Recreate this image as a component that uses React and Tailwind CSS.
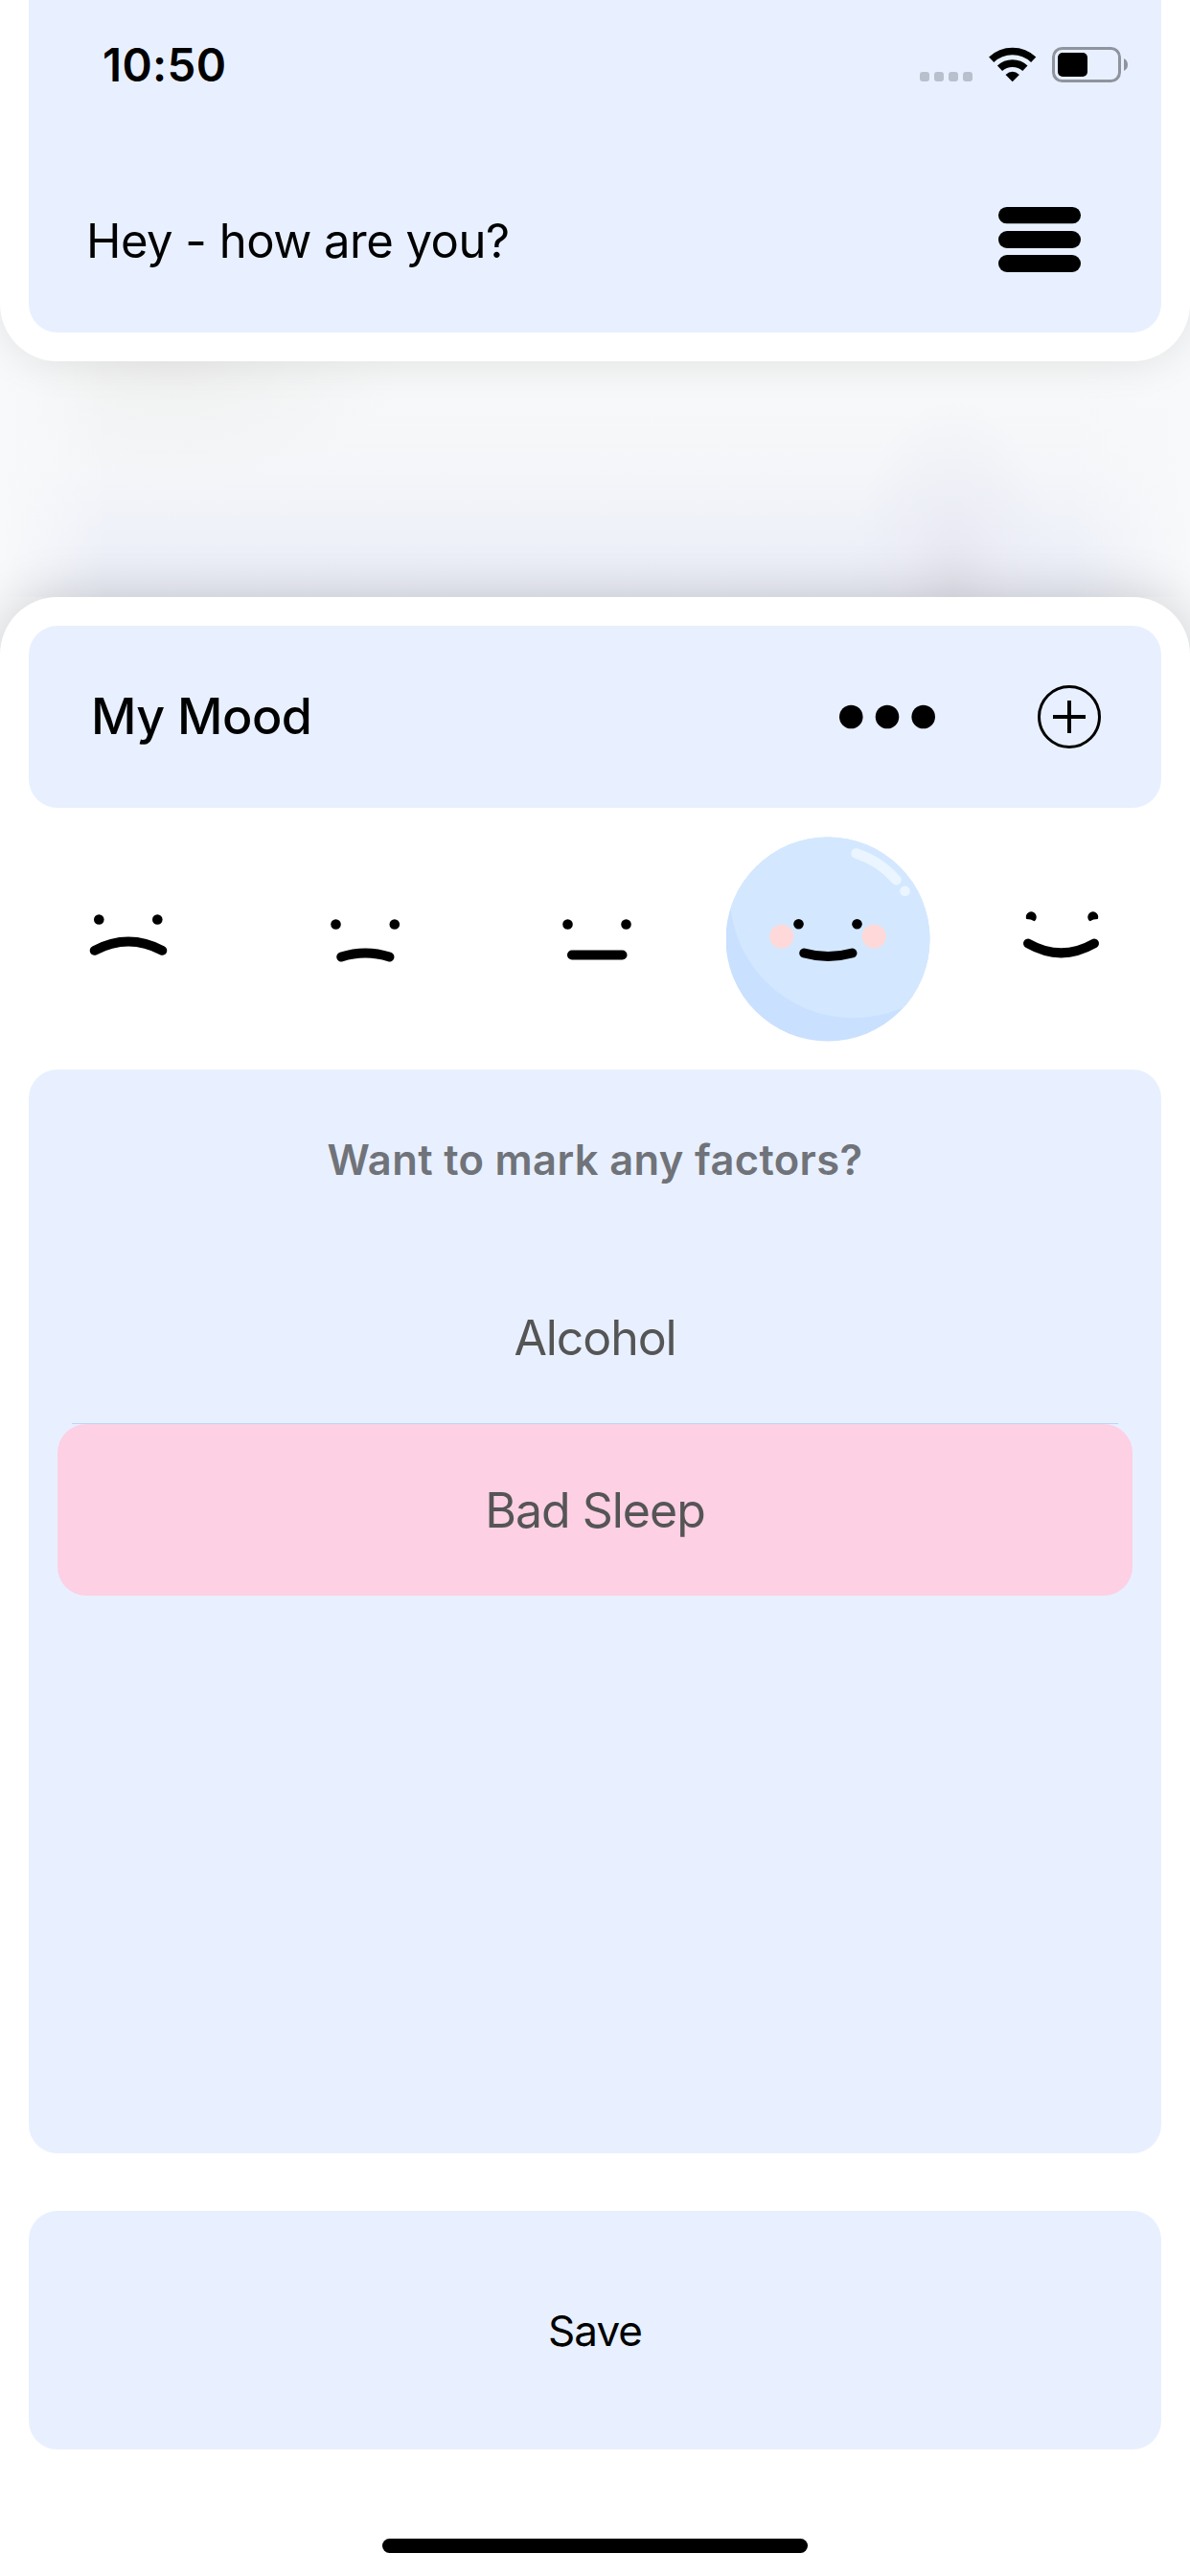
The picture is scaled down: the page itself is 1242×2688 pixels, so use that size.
const PANEL = "bg-[#e8f0ff]";

function StatusIcons() {
  return (
    <svg width="220" height="40" viewBox="958 48 220 40" className="block">
      <g fill="#b9c0cd">
        <rect x="960" y="75" width="10" height="10" rx="3" />
        <rect x="975" y="75" width="10" height="10" rx="3" />
        <rect x="990" y="75" width="10" height="10" rx="3" />
        <rect x="1005" y="75" width="10" height="10" rx="3" />
      </g>
      <g fill="none" stroke="#000" strokeWidth="7.6">
        <path d="M1034.7 62.3 A32 32 0 0 1 1078.7 62.3" />
        <path d="M1043.5 71.3 A19.5 19.5 0 0 1 1069.9 71.3" />
      </g>
      <path d="M1049.5 78 Q1056.7 71.5 1063.9 78 L1056.7 85.2 Z" />
      <rect x="1099.5" y="50.5" width="69" height="34" rx="9" fill="none" stroke="#8f949e" strokeWidth="3" />
      <rect x="1104" y="55" width="31" height="25" rx="5" />
      <path d="M1173 61 Q1177 63 1177 67.5 Q1177 72 1173 74 Z" fill="#8f949e" />
    </svg>
  );
}

function MenuIcon() {
  return (
    <svg width="86" height="68" viewBox="1042 216 86 68" className="mb-[2px] block">
      <rect x="1042" y="216" width="86" height="17.3" rx="8.6" />
      <rect x="1042" y="241" width="86" height="18" rx="9" />
      <rect x="1042" y="266" width="86" height="18" rx="9" />
    </svg>
  );
}

function Face({ viewBox, eyes, mouth, children }) {
  return (
    <svg width="214" height="214" viewBox={viewBox} className="block shrink-0">
      {children}
      {eyes.map(([x, y]) => (
        <circle key={x} cx={x} cy={y} r="5.3" />
      ))}
      <path d={mouth} fill="none" stroke="#000" strokeWidth="10" strokeLinecap="round" />
    </svg>
  );
}

export default function App() {
  return (
    <div className="flex h-[2688px] w-[1242px] flex-col overflow-hidden bg-white font-['Inter','Noto_Sans',sans-serif] text-black">
      <div className="flex h-[2588px] flex-col overflow-hidden bg-[#f8f9fa]">
        <header className="relative z-10 h-[377px] rounded-b-[60px] bg-white px-[30px] shadow-[0_0_45px_rgba(0,0,0,0.1)]">
          <div className={`h-[347px] rounded-b-[30px] ${PANEL}`}>
            <div className="flex h-[136px] items-center justify-between pr-[34px] pl-[77px]">
              <span className="text-[47.5px] leading-none font-semibold tracking-[0.3px]">10:50</span>
              <StatusIcons />
            </div>
            <div className="flex h-[230px] items-center justify-between pr-[84px] pl-[60px]">
              <h1 className="text-[49px] leading-none tracking-[-0.5px]">Hey - how are you?</h1>
              <MenuIcon />
            </div>
          </div>
        </header>

        <div className="h-[246px] shrink-0 bg-[linear-gradient(to_right,#f8f9fa,transparent_9%,transparent_90%,#f8f9fa),radial-gradient(ellipse_110px_200px_at_995px_240px,#e5e5ef,#e9eaf480_50%,transparent),radial-gradient(ellipse_240px_130px_at_180px_0px,#f0f0f0,transparent),linear-gradient(to_bottom,#f7f9f9,#f4f6f9_45%,#eef0f9_80%,#ebedf7)]" />

        <main className="relative z-10 h-[1965px] shrink-0 rounded-t-[60px] bg-white px-[30px] pt-[30px] shadow-[0_0_55px_rgba(0,0,0,0.18)]">
          <section className={`flex h-[190px] items-center rounded-[30px] pr-[63px] pl-[65px] ${PANEL}`}>
            <h2 className="grow text-[52px] leading-none font-medium tracking-[-0.5px]">My Mood</h2>
            <svg width="100" height="26" viewBox="876 735 100 26" className="mr-[107px] block">
              <circle cx="888.3" cy="748" r="12.3" />
              <circle cx="926" cy="748" r="12.3" />
              <circle cx="963.7" cy="748" r="12.3" />
            </svg>
            <svg width="66" height="66" viewBox="0 0 66 66" fill="none" stroke="#000" className="block">
              <circle cx="33" cy="33" r="31.5" strokeWidth="3" />
              <path d="M33 16 V50 M16 33 H50" strokeWidth="4" />
            </svg>
          </section>

          <section className="-mx-[3px] flex h-[273px] items-center justify-between">
            <Face viewBox="27 872.5 214 214" eyes={[[103.3, 959], [164.3, 959]]} mouth="M98.7 991.3 Q134 972.7 169.3 991.3" />
            <Face viewBox="270.5 872.5 214 214" eyes={[[350, 964], [411.3, 964]]} mouth="M355.7 998 Q380.7 990 406 998" />
            <Face viewBox="514 872.5 214 214" eyes={[[592.5, 964], [653.5, 964]]} mouth="M597 996 H649.5" />
            <Face viewBox="757.5 872.5 214 214" eyes={[[833, 963.7], [894, 963.7]]} mouth="M838.7 994 Q863.7 1001 889 994">
              <defs>
                <clipPath id="ball">
                  <circle cx="863.5" cy="979.5" r="106.5" />
                </clipPath>
              </defs>
              <circle cx="863.5" cy="979.5" r="106.5" fill="#c9e0ff" />
              <circle cx="890" cy="933" r="128.7" fill="#d3e8ff" clipPath="url(#ball)" />
              <path d="M893 890 A94.4 94.4 0 0 1 935 917.7" fill="none" stroke="#ebf5ff" strokeWidth="10.5" strokeLinecap="round" />
              <circle cx="944" cy="929.3" r="5.3" fill="#ebf5ff" />
              <circle cx="815.3" cy="976.7" r="12.5" fill="#ffd9d9" />
              <circle cx="911.7" cy="976.7" r="12.5" fill="#ffd9d9" />
            </Face>
            <Face viewBox="1001 872.5 214 214" eyes={[]} mouth="M1073 984 Q1107.5 1003.7 1142 984">
              <path d="M1071.2 958.5 A5.5 5.5 0 1 1 1079.5 960.8 Q1076 958.5 1071.2 958.5 Z M1145.8 958.5 A5.5 5.5 0 1 0 1137.5 960.8 Q1141 958.5 1145.8 958.5 Z" />
            </Face>
          </section>

          <section className={`h-[1131px] rounded-[30px] px-[30px] text-center ${PANEL}`}>
            <h3 className="flex h-[190px] items-center justify-center text-[43.5px] leading-none font-semibold tracking-[0.35px] text-[#707379]">
              Want to mark any factors?
            </h3>
            <div className="mx-[15px] flex h-[180px] items-center justify-center border-b border-[#b8d4ff] text-[50px] leading-none tracking-[-1.1px] text-[#555]">
              Alcohol
            </div>
            <div className="flex h-[179px] items-center justify-center rounded-[30px] bg-[#fdd0e4] text-[50px] leading-none tracking-[-1px] text-[#555]">
              Bad Sleep
            </div>
          </section>

          <button className={`mt-[60px] flex h-[249px] w-full items-center justify-center rounded-[30px] text-[44px] leading-none tracking-[-0.9px] ${PANEL}`}>
            Save
          </button>
        </main>
      </div>
      <div className="mx-auto mt-[61px] h-[15px] w-[444px] rounded-full bg-black" />
    </div>
  );
}
